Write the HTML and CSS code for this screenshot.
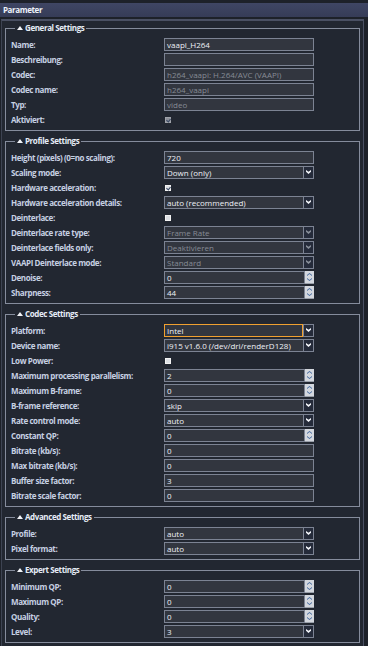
FILE: index.html
```html
<!DOCTYPE html>
<html lang="de">
  <head>
    <meta charset="UTF-8" />
    <meta name="viewport" content="width=device-width, initial-scale=1.0" />
    <title>Parameter</title>
    <link rel="stylesheet" href="styles.css">
  </head>
  <body>
    <div class="titlebar">Parameter</div>
    <div class="panel">

      <fieldset>
        <legend><span class="tri"></span>General Settings</legend>
        <div class="rows">
          <label>Name:</label>
          <div class="field">vaapi_H264</div>
          <label>Beschreibung:</label>
          <div class="field"></div>
          <label>Codec:</label>
          <div class="field off">h264_vaapi: H.264/AVC (VAAPI)</div>
          <label>Codec name:</label>
          <div class="field off">h264_vaapi</div>
          <label>Typ:</label>
          <div class="field off">video</div>
          <label>Aktiviert:</label>
          <div><span class="check on off"></span></div>
        </div>
      </fieldset>

      <fieldset>
        <legend><span class="tri"></span>Profile Settings</legend>
        <div class="rows">
          <label>Height (pixels) (0=no scaling):</label>
          <div class="field">720</div>
          <label>Scaling mode:</label>
          <div class="select"><span class="val">Down (only)</span><span class="arrow"></span></div>
          <label>Hardware acceleration:</label>
          <div><span class="check on"></span></div>
          <label>Hardware acceleration details:</label>
          <div class="select"><span class="val">auto (recommended)</span><span class="arrow"></span></div>
          <label>Deinterlace:</label>
          <div><span class="check"></span></div>
          <label>Deinterlace rate type:</label>
          <div class="select off"><span class="val">Frame Rate</span><span class="arrow"></span></div>
          <label>Deinterlace fields only:</label>
          <div class="select off"><span class="val">Deaktivieren</span><span class="arrow"></span></div>
          <label>VAAPI Deinterlace mode:</label>
          <div class="select off"><span class="val">Standard</span><span class="arrow"></span></div>
          <label>Denoise:</label>
          <div class="spin"><span class="val">0</span><span class="btns"></span></div>
          <label>Sharpness:</label>
          <div class="spin"><span class="val">44</span><span class="btns"></span></div>
        </div>
      </fieldset>

      <fieldset>
        <legend><span class="tri"></span>Codec Settings</legend>
        <div class="rows">
          <label>Platform:</label>
          <div class="select focus"><span class="val">Intel</span><span class="arrow"></span></div>
          <label>Device name:</label>
          <div class="select"><span class="val">i915 v1.6.0 (/dev/dri/renderD128)</span><span class="arrow"></span></div>
          <label>Low Power:</label>
          <div><span class="check"></span></div>
          <label>Maximum processing parallelism:</label>
          <div class="spin"><span class="val">2</span><span class="btns"></span></div>
          <label>Maximum B-frame:</label>
          <div class="spin"><span class="val">0</span><span class="btns"></span></div>
          <label>B-frame reference:</label>
          <div class="select"><span class="val">skip</span><span class="arrow"></span></div>
          <label>Rate control mode:</label>
          <div class="select"><span class="val">auto</span><span class="arrow"></span></div>
          <label>Constant QP:</label>
          <div class="spin"><span class="val">0</span><span class="btns"></span></div>
          <label>Bitrate (kb/s):</label>
          <div class="field">0</div>
          <label>Max bitrate (kb/s):</label>
          <div class="field">0</div>
          <label>Buffer size factor:</label>
          <div class="field">3</div>
          <label>Bitrate scale factor:</label>
          <div class="field">0</div>
        </div>
      </fieldset>

      <fieldset>
        <legend><span class="tri"></span>Advanced Settings</legend>
        <div class="rows">
          <label>Profile:</label>
          <div class="select"><span class="val">auto</span><span class="arrow"></span></div>
          <label>Pixel format:</label>
          <div class="select"><span class="val">auto</span><span class="arrow"></span></div>
        </div>
      </fieldset>

      <fieldset>
        <legend><span class="tri"></span>Expert Settings</legend>
        <div class="rows">
          <label>Minimum QP:</label>
          <div class="spin"><span class="val">0</span><span class="btns"></span></div>
          <label>Maximum QP:</label>
          <div class="spin"><span class="val">0</span><span class="btns"></span></div>
          <label>Quality:</label>
          <div class="spin"><span class="val">0</span><span class="btns"></span></div>
          <label>Level:</label>
          <div class="select"><span class="val">3</span><span class="arrow"></span></div>
        </div>
      </fieldset>

    </div>
  </body>
</html>
```

FILE: styles.css
```css
* {
  padding: 0;
  margin: 0;
  box-sizing: border-box;
}
body {
  width: 368px;
  height: 646px;
  overflow: hidden;
  background: #1d2129;
  font-family: "Open Sans", "Noto Sans", sans-serif;
  font-size: 8px;
  color: #c6d0e2;
  padding-top: 3px;
}
.titlebar {
  height: 14px;
  line-height: 14px;
  padding-left: 3px;
  background: linear-gradient(#3f4664, #363c57);
  color: #eef2fa;
  font-weight: bold;
  letter-spacing: -0.4px;
}
.panel {
  margin: 2px 4px 0 1px;
  height: 640px;
  border-top: 2px solid #4a5063;
  border-left: 1px solid #3d4352;
  border-right: 1px solid #4a5063;
  background: #222731;
  padding: 2px 3px 0 3px;
}
fieldset {
  border: 1px solid #858c9c;
  padding: 5px 5px 4px 5px;
  margin-bottom: 5px;
}
legend {
  margin-left: 4px;
  padding: 0 2px;
  line-height: 10px;
  height: 10px;
  font-weight: bold;
  letter-spacing: -0.4px;
  color: #e6ecf6;
}
.tri {
  display: inline-block;
  width: 0;
  height: 0;
  border-left: 3px solid transparent;
  border-right: 3px solid transparent;
  border-bottom: 4px solid #f2f4f8;
  margin-right: 2px;
  vertical-align: 1px;
}
.rows {
  display: grid;
  grid-template-columns: 153px 150px;
  grid-auto-rows: 13px;
  row-gap: 2px;
}
.rows label {
  font-weight: bold;
  letter-spacing: -0.4px;
  line-height: 13px;
  white-space: nowrap;
}
.field,
.select,
.spin {
  height: 13px;
  line-height: 11px;
  color: #eef1f6;
  white-space: nowrap;
  overflow: hidden;
}
.field {
  border: 1px solid #7c8393;
  background: #32363f;
  padding-left: 2px;
}
.field.off,
.select.off .val {
  color: #868b95;
}
.select,
.spin {
  display: flex;
}
.val {
  flex: 1;
  border: 1px solid #7c8393;
  background: #32363f;
  padding-left: 2px;
  overflow: hidden;
}
.select .val {
  border-right: none;
}
.select.focus .val {
  border: 1px solid #f0a030;
}
.arrow {
  width: 11px;
  border: 1px solid #7c8393;
  background: #252b3a;
  position: relative;
}
.arrow::after {
  content: "";
  position: absolute;
  left: 2px;
  top: 3px;
  width: 5px;
  height: 4px;
  background: #f4f6fa;
  clip-path: polygon(0 0, 50% 45%, 100% 0, 100% 45%, 50% 100%, 0 45%);
}
.select.off .arrow::after {
  background: #8a909a;
}
.spin .btns {
  width: 9px;
  background: #d3d7de;
  border-bottom: 1px solid #9aa0aa;
  position: relative;
}
.spin .btns::before,
.spin .btns::after {
  content: "";
  position: absolute;
  left: 2px;
  width: 5px;
  height: 3px;
  background: #41669c;
}
.spin .btns::before {
  top: 2px;
  clip-path: polygon(50% 0, 100% 70%, 100% 100%, 50% 35%, 0 100%, 0 70%);
}
.spin .btns::after {
  top: 7px;
  clip-path: polygon(0 0, 50% 65%, 100% 0, 100% 30%, 50% 100%, 0 30%);
}
.check {
  display: inline-block;
  width: 6px;
  height: 6px;
  margin-top: 4px;
  margin-left: 1px;
  background: #dcdfe4;
  border: 1px solid #f2f2f2;
  position: relative;
}
.check.on::after {
  content: "";
  position: absolute;
  left: 1px;
  top: 0;
  width: 2px;
  height: 3px;
  border-right: 1px solid #3a4a66;
  border-bottom: 1px solid #3a4a66;
  transform: rotate(40deg);
}
.check.off {
  background: #8d9099;
  border-color: #a0a3aa;
}
```
